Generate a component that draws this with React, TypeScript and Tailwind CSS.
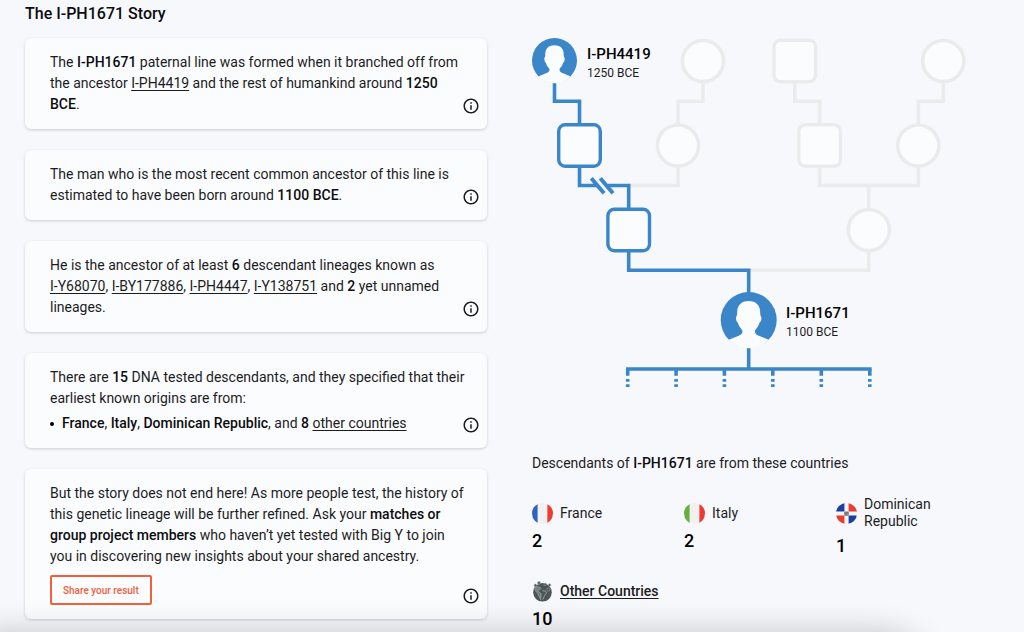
import type { ReactNode } from "react";

const BLUE = "#3b86c8";
const GREY = "#ebebec";
const FILL = "#fbfcfe";

function InfoIcon() {
  return (
    <svg viewBox="0 0 24 24" className="h-[18px] w-[18px]" fill="#1c1c1e" aria-hidden="true">
      <path d="M11 7h2v2h-2zm0 4h2v6h-2zm1-9C6.48 2 2 6.48 2 12s4.48 10 10 10 10-4.48 10-10S17.52 2 12 2zm0 18c-4.41 0-8-3.59-8-8s3.59-8 8-8 8 3.59 8 8-3.59 8-8 8z" />
    </svg>
  );
}

function StoryCard({ children }: { children: ReactNode }) {
  return (
    <section className="relative rounded-md bg-[#fbfcfe] py-3.5 pr-[21px] pl-[25px] shadow-[0_1px_3px_rgba(0,0,0,0.18)]">
      {children}
      <button type="button" aria-label="More information" className="absolute right-[7px] bottom-3.5">
        <InfoIcon />
      </button>
    </section>
  );
}

function LineageLink({ children }: { children: ReactNode }) {
  return (
    <a href="#" className="whitespace-nowrap underline underline-offset-2">
      {children}
    </a>
  );
}

function B({ children }: { children: ReactNode }) {
  return <strong className="font-medium text-[#0c0c0e]">{children}</strong>;
}

function Avatar({ cx, cy, r }: { cx: number; cy: number; r: number }) {
  const s = r / 28;
  return (
    <g transform={`translate(${cx} ${cy}) scale(${s})`}>
      <circle r="28" fill={BLUE} />
      {/* head and shoulders */}
      <path
        d="M0 -19C-8 -19 -12 -14 -11.5 -6C-11.7 -4 -13.3 -3 -12.6 -0.5C-12.3 1.5 -11.5 2 -10.8 2.7C-10 6 -8 8 -6.3 10.6C-5.8 13.5 -7.5 14.7 -10 15.7L-20 19.8C-15 25 -8 28.3 0 28.3C8 28.3 15 25 20 19.8L10 15.7C7.5 14.7 5.8 13.5 6.3 10.6C8 8 10 6 10.8 2.7C11.5 2 12.3 1.5 12.6 -0.5C13.3 -3 11.7 -4 11.5 -6C12 -14 8 -19 0 -19Z"
        fill={FILL}
      />
    </g>
  );
}

function Box({ cx, cy, color }: { cx: number; cy: number; color: string }) {
  return (
    <rect x={cx - 20.8} y={cy - 20.8} width="41.6" height="41.6" rx="6.5" fill={FILL} stroke={color} strokeWidth="3.4" />
  );
}

function Ring({ cx, cy }: { cx: number; cy: number }) {
  return <circle cx={cx} cy={cy} r="20.6" fill={FILL} stroke={GREY} strokeWidth="3.5" />;
}

function FamilyTree() {
  const branches = [95.7, 144.1, 192.4, 240.8, 289.3, 337.8];

  return (
    <div className="relative">
      <svg width="434" height="350" viewBox="0 0 434 350" fill="none" aria-hidden="true">
        <g stroke={GREY} strokeWidth="3.6">
          <path d="M171 44V63.3H146V86" />
          <path d="M146 129V147.5H96.7" />
          <path d="M262.8 44V63.3H287.7V86" />
          <path d="M411.3 44V63.3H386.3V86" />
          <path d="M287.7 129V147.5H386.3V129M336.8 147.5V172" />
          <path d="M336.8 213V232.3H216.7" />
        </g>
        <g stroke={BLUE} strokeWidth="3.6">
          <path d="M22.5 45V63.3H47.5V86" />
          <path d="M47.5 129V147.5H66M76 147.5H96.7V170" />
          <path d="M59.3 140.3L72 155.3M68.3 140.3L81 155.3" strokeWidth="4" />
          <path d="M96.7 213V232.3H216.7V256" />
          <path d="M216.7 310V331" />
          <path d="M94 331H339.6" />
          {branches.map((x) => (
            <path key={x} d={`M${x} 331V337.7M${x} 341V343.8M${x} 346.2V349`} />
          ))}
        </g>

        <Ring cx={171} cy={23} />
        <Ring cx={146} cy={107.5} />
        <Box cx={262.8} cy={23} color={GREY} />
        <Box cx={287.7} cy={107.5} color={GREY} />
        <Ring cx={411.3} cy={23} />
        <Ring cx={386.3} cy={107.5} />
        <Ring cx={336.8} cy={192} />

        <Avatar cx={22.5} cy={22.5} r={22.5} />
        <Box cx={47.5} cy={107.5} color={BLUE} />
        <Box cx={96.7} cy={192} color={BLUE} />
        <Avatar cx={216.7} cy={282} r={28} />
      </svg>

      <div className="absolute top-1.5 left-[55px]">
        <p className="text-[15px] leading-5 font-medium text-black">I-PH4419</p>
        <p className="text-xs leading-[18px]">1250 BCE</p>
      </div>
      <div className="absolute top-[265px] left-[254px]">
        <p className="text-[15px] leading-5 font-medium text-black">I-PH1671</p>
        <p className="text-xs leading-[18px]">1100 BCE</p>
      </div>
    </div>
  );
}

function TricolorFlag({ left }: { left: string }) {
  return (
    <svg viewBox="0 0 21 21" className="h-[21px] w-[21px] overflow-hidden rounded-full" aria-hidden="true">
      <rect width="21" height="21" fill="#f1f1f2" />
      <rect width="5.6" height="21" fill={left} />
      <rect x="15.4" width="5.6" height="21" fill="#ed3b2f" />
    </svg>
  );
}

function DominicanFlag() {
  return (
    <svg viewBox="0 0 21 21" className="h-[21px] w-[21px] overflow-hidden rounded-full" aria-hidden="true">
      <rect width="21" height="21" fill="#f4f5f8" />
      <path d="M0 0H8.4V8.4H0zM12.6 12.6H21V21H12.6z" fill="#1c3f9f" />
      <path d="M12.6 0H21V8.4H12.6zM0 12.6H8.4V21H0z" fill="#ed3b2f" />
      <rect x="8.2" y="8.4" width="4.6" height="4.4" rx="1" fill="#747780" />
      <path d="M9.4 9.4h1.3v1.2H9.4z" fill="#8c7f86" />
      <path d="M10.8 10.6h1.4v1.4h-1.4z" fill="#c07c6d" />
    </svg>
  );
}

function GlobeIcon() {
  return (
    <svg viewBox="0 0 21 21" className="h-[21px] w-[21px]" aria-hidden="true">
      <circle cx="10.5" cy="11.3" r="9.3" fill="#4c5457" />
      {/* pins around the top edge */}
      <g fill="#4c5457" stroke="#a4a9ab" strokeWidth="0.6">
        <circle cx="3.4" cy="4.4" r="1.3" />
        <circle cx="7" cy="2" r="1.4" />
        <circle cx="13.2" cy="3.4" r="1.2" />
        <circle cx="17.6" cy="4" r="1.2" />
        <circle cx="16.5" cy="8.5" r="1.6" />
      </g>
      <path
        d="M2.4 6.6L5 5.6L8 6.2L9.2 7.6L7.2 8.8L5.4 9.6L8 11.6L9.4 13.4L8.6 18.8L7 15.6L5.6 12.4L3.4 9.8z"
        fill="#777f82"
        stroke="#aab0b2"
        strokeWidth="0.5"
      />
      <path d="M10.4 9.8L13.6 10L14.4 12.2L12.4 14.8L10.8 18.6" fill="none" stroke="#aab0b2" strokeWidth="0.8" />
    </svg>
  );
}

export default function App() {
  const countries = [
    { name: "France", count: 2, icon: <TricolorFlag left="#2f62c4" /> },
    { name: "Italy", count: 2, icon: <TricolorFlag left="#6aae3e" /> },
    { name: "Dominican Republic", count: 1, icon: <DominicanFlag /> },
    { name: "Other Countries", count: 10, icon: <GlobeIcon />, link: true },
  ];

  return (
    <div className="min-h-screen bg-[#f7f8fc] font-[Roboto,sans-serif] text-sm leading-[21px] text-[#1c1c1e]">
      <main className="grid grid-cols-[minmax(0,462fr)_minmax(0,467fr)] gap-x-[45px] px-[25px]">
        {/* Story */}
        <div>
          <h1 className="pt-1 pb-3.5 text-base leading-5 font-medium text-[#0c0c0e]">The I-PH1671 Story</h1>
          <div className="flex flex-col gap-[21px]">
            <StoryCard>
              <p>
                The <B>I-PH1671</B> paternal line was formed when it branched off from the ancestor{" "}
                <LineageLink>I-PH4419</LineageLink> and the rest of humankind around <B>1250 BCE</B>.
              </p>
            </StoryCard>
            <StoryCard>
              <p>
                The man who is the most recent common ancestor of this line is estimated to have been born around{" "}
                <B>1100 BCE</B>.
              </p>
            </StoryCard>
            <StoryCard>
              <p>
                He is the ancestor of at least <B>6</B> descendant lineages known as <LineageLink>I-Y68070</LineageLink>,{" "}
                <LineageLink>I-BY177886</LineageLink>, <LineageLink>I-PH4447</LineageLink>,{" "}
                <LineageLink>I-Y138751</LineageLink> and <B>2</B> yet unnamed lineages.
              </p>
            </StoryCard>
            <StoryCard>
              <p>
                There are <B>15</B> DNA tested descendants, and they specified that their earliest known origins are
                from:
              </p>
              <ul className="mt-1">
                <li className="flex items-center gap-2">
                  <span className="h-1 w-1 rounded-full bg-black" />
                  <span>
                    <B>France</B>, <B>Italy</B>, <B>Dominican Republic</B>, and <B>8</B>{" "}
                    <LineageLink>other countries</LineageLink>
                  </span>
                </li>
              </ul>
            </StoryCard>
            <StoryCard>
              <p>
                But the story does not end here! As more people test, the history of this genetic lineage will be further
                refined. Ask your <B>matches or group project members</B> who haven’t yet tested with Big Y to join you in
                discovering new insights about your shared ancestry.
              </p>
              <button
                type="button"
                className="mt-2 block h-[30px] rounded-xs border-2 border-[#f0603c] px-[11px] text-[10px] font-medium text-[#f0603c]"
              >
                Share your result
              </button>
            </StoryCard>
          </div>
        </div>

        {/* Tree and countries */}
        <div className="pt-[38px]">
          <FamilyTree />
          <p className="mt-[65px]">
            Descendants of <B>I-PH1671</B> are from these countries
          </p>
          <ul className="mt-[22px] grid grid-cols-[repeat(3,152px)] items-center gap-y-[21px]">
            {countries.map((country) => (
              <li key={country.name}>
                <div className="flex min-h-6 items-center gap-[7px] leading-[17px]">
                  <span className="shrink-0">{country.icon}</span>
                  {country.link ? (
                    <a href="#" className="font-medium whitespace-nowrap underline underline-offset-2">
                      {country.name}
                    </a>
                  ) : (
                    <span className="max-w-20">{country.name}</span>
                  )}
                </div>
                <p className="mt-1 text-lg leading-6 font-medium text-black">{country.count}</p>
              </li>
            ))}
          </ul>
        </div>
      </main>

      {/* Soft shade along the bottom edge */}
      <div className="pointer-events-none fixed top-full right-[100px] -left-10 h-24 rounded-[40px] shadow-[0_0_32px_rgba(0,0,0,0.2)]" />
    </div>
  );
}
